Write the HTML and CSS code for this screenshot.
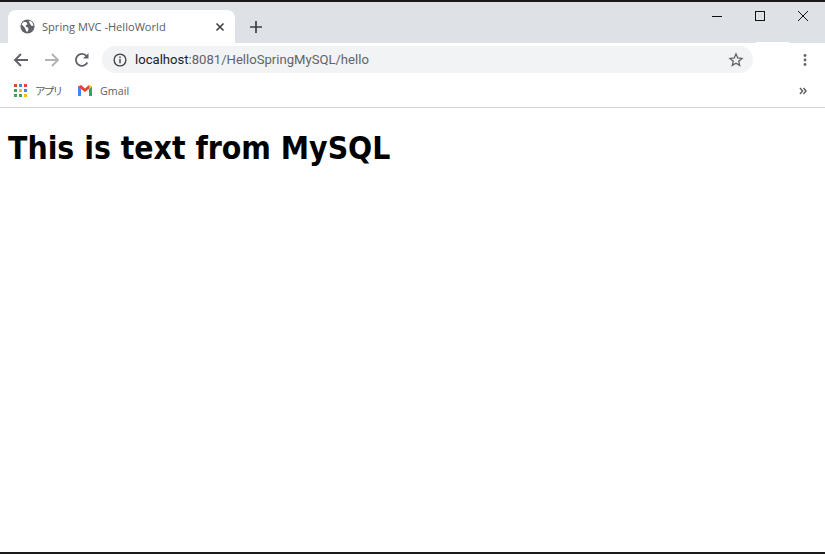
FILE: index.html
```html
<!DOCTYPE html>
<html lang="en">
<head>
    <meta charset="UTF-8">
    <title>Spring MVC -HelloWorld</title>
    <link rel="stylesheet" href="styles.css">
</head>
<body>
    <div class="window">
        <div class="tabstrip">
            <div class="tab">
                <svg class="favicon" width="15" height="15" viewBox="0 0 16 16">
                    <circle cx="8" cy="8" r="7.500" fill="#5f6368"/>
                    <path d="M1.500 5.500L4 3l3 .5 1 2-2 1.500.5 1.500 2 .5.5 2.500L7.500 14 6 11.500 5 9z M10.500 1.500l2.500 2 1.500 3.500-2 .5-1.500-2-1.500-2.500z" fill="#fff"/>
                </svg>
                <span class="tab-title">Spring MVC -HelloWorld</span>
                <svg class="tab-close" width="10" height="10" viewBox="0 0 10 10">
                    <path d="M1.500 1.500l7 7M8.500 1.500l-7 7" stroke="#3c4043" stroke-width="1.600"/>
                </svg>
            </div>
            <svg class="new-tab" width="12" height="12" viewBox="0 0 12 12">
                <path d="M6 0v12M0 6h12" stroke="#3c4043" stroke-width="1.700"/>
            </svg>
            <div class="window-controls">
                <svg class="win-btn" width="10" height="10" viewBox="0 0 10 10">
                    <path d="M0 5.500h10" stroke="#111" stroke-width="1"/>
                </svg>
                <svg class="win-btn" width="10" height="10" viewBox="0 0 10 10">
                    <rect x=".5" y=".5" width="9" height="9" fill="none" stroke="#111" stroke-width="1"/>
                </svg>
                <svg class="win-btn" width="10" height="10" viewBox="0 0 10 10">
                    <path d="M0 0l10 10M10 0L0 10" stroke="#111" stroke-width="1"/>
                </svg>
            </div>
            <div class="strip-notch"></div>
        </div>

        <div class="toolbar">
            <svg class="nav-icon" width="16" height="16" viewBox="0 0 16 16">
                <path d="M15 8H2M8 2L2 8l6 6" fill="none" stroke="#5f6368" stroke-width="1.900"/>
            </svg>
            <svg class="nav-icon" width="16" height="16" viewBox="0 0 16 16">
                <path d="M1 8h13M8 2l6 6-6 6" fill="none" stroke="#b1b3b6" stroke-width="1.900"/>
            </svg>
            <svg class="nav-icon" width="16" height="16" viewBox="0 0 16 16">
                <path d="M13.300 10.500A6 6 0 1 1 12.500 4" fill="none" stroke="#5f6368" stroke-width="1.800"/>
                <path d="M14.500 1v5.500H9z" fill="#5f6368"/>
            </svg>
            <div class="omnibox">
                <svg class="info-icon" width="14" height="14" viewBox="0 0 14 14">
                    <circle cx="7" cy="7" r="5.900" fill="none" stroke="#3c4043" stroke-width="1.300"/>
                    <path d="M7 6v4.200M7 3.500v1.400" stroke="#3c4043" stroke-width="1.400"/>
                </svg>
                <span class="url"><span class="url-host">localhost</span>:8081/HelloSpringMySQL/hello</span>
                <svg class="star" width="16" height="16" viewBox="0 0 16 16">
                    <path d="M8 2l1.700 4 4.300.4-3.300 2.800 1 4.200L8 11.200l-3.700 2.200 1-4.200L2 6.400 6.300 6z" fill="none" stroke="#5f6368" stroke-width="1.300"/>
                </svg>
            </div>
            <svg class="menu-icon" width="4" height="14" viewBox="0 0 4 14">
                <circle cx="2" cy="2.500" r="1.400" fill="#5f6368"/>
                <circle cx="2" cy="7" r="1.400" fill="#5f6368"/>
                <circle cx="2" cy="11.500" r="1.400" fill="#5f6368"/>
            </svg>
        </div>

        <div class="bookmarks">
            <svg class="apps-icon" width="14" height="14" viewBox="0 0 14 14">
                <rect x="0" y="0" width="3" height="3" fill="#ea4335"/>
                <rect x="5" y="0" width="3" height="3" fill="#4285f4"/>
                <rect x="10" y="0" width="3" height="3" fill="#ea4335"/>
                <rect x="0" y="5" width="3" height="3" fill="#34a853"/>
                <rect x="5" y="5" width="3" height="3" fill="#fbbc05"/>
                <rect x="10" y="5" width="3" height="3" fill="#4285f4"/>
                <rect x="0" y="10" width="3" height="3" fill="#34a853"/>
                <rect x="5" y="10" width="3" height="3" fill="#34a853"/>
                <rect x="10" y="10" width="3" height="3" fill="#fbbc05"/>
            </svg>
            <span class="bookmark-label label-apps">アプリ</span>
            <svg class="gmail-icon" width="14" height="11" viewBox="0 0 14 11">
                <path d="M0 1.500V11h3V4z" fill="#4285f4"/>
                <path d="M14 1.500V11h-3V4z" fill="#34a853"/>
                <path d="M0 1.500L3 0l4 3.500L11 0l1 3-5 4-4-3-3-2z" fill="#ea4335"/>
                <path d="M11 0l3 1.500L11 4z" fill="#fbbc05"/>
            </svg>
            <span class="bookmark-label">Gmail</span>
            <svg class="more-icon" width="8" height="8" viewBox="0 0 8 8">
                <path d="M1 1l2.500 3L1 7M4.500 1L7 4 4.500 7" fill="none" stroke="#5f6368" stroke-width="1.500"/>
            </svg>
        </div>

        <main class="page">
            <h1>This is text from MySQL</h1>
        </main>
    </div>
</body>
</html>
```

FILE: styles.css
```css
html, body {
    margin: 0;
    height: 100%;
}
body {
    background-color: #fff;
    font-family: "Open Sans", "Noto Sans CJK JP", sans-serif;
    overflow: hidden;
}
.window {
    height: 554px;
    box-sizing: border-box;
    border-top: 2px solid #1a1a1a;
    border-bottom: 2px solid #1a1a1a;
    display: flex;
    flex-direction: column;
}

/* Tab strip */
.tabstrip {
    position: relative;
    height: 41px;
    flex-shrink: 0;
    background-color: #dee1e6;
    display: flex;
    align-items: flex-end;
    padding-left: 8px;
}
.tab {
    width: 227px;
    height: 33px;
    box-sizing: border-box;
    background-color: #fff;
    border-radius: 8px 8px 0 0;
    display: flex;
    align-items: center;
    padding: 0 10px 0 12px;
}
.favicon {
    flex-shrink: 0;
    margin-right: 7px;
}
.tab-title {
    flex: 1;
    font-size: 11.100px;
    color: #5a5d61;
    white-space: nowrap;
}
.new-tab {
    margin: 0 0 10px 15px;
}
.window-controls {
    margin-left: auto;
    align-self: flex-start;
    display: flex;
    gap: 33px;
    padding: 9px 17px 0 0;
}
.strip-notch {
    position: absolute;
    left: 756px;
    bottom: 0;
    width: 33px;
    height: 1px;
    background-color: #fff;
}

/* Toolbar */
.toolbar {
    height: 33px;
    flex-shrink: 0;
    display: flex;
    align-items: center;
    padding-left: 13px;
}
.nav-icon {
    margin-right: 15px;
}
.nav-icon:nth-child(3) {
    margin-left: -1px;
    margin-right: 12px;
}
.omnibox {
    width: 651px;
    height: 27px;
    box-sizing: border-box;
    background-color: #f1f3f4;
    border-radius: 14px;
    display: flex;
    align-items: center;
    padding: 0 9px 0 11px;
}
.info-icon {
    margin-right: 8px;
}
.url {
    flex: 1;
    font-family: Roboto, sans-serif;
    font-size: 13.100px;
    color: #5f6368;
}
.url-host {
    color: #202124;
}
.menu-icon {
    margin-left: 50px;
}

/* Bookmarks */
.bookmarks {
    height: 32px;
    flex-shrink: 0;
    box-sizing: border-box;
    border-bottom: 1px solid #d3d5d8;
    display: flex;
    align-items: center;
    padding: 0 18px 2px 14px;
}
.bookmark-label {
    font-size: 10.700px;
    color: #5a5d61;
}
.label-apps {
    margin: 0 17px 0 7px;
    letter-spacing: -2px;
}
.gmail-icon {
    margin-right: 8px;
}
.more-icon {
    margin-left: auto;
}

/* Page content */
.page {
    flex: 1;
    padding: 22px 8px 0;
}
h1 {
    margin: 0;
    font-family: "DejaVu Sans Condensed", "DejaVu Sans", sans-serif;
    font-size: 31.600px;
    font-weight: bold;
    color: #000;
}
```
